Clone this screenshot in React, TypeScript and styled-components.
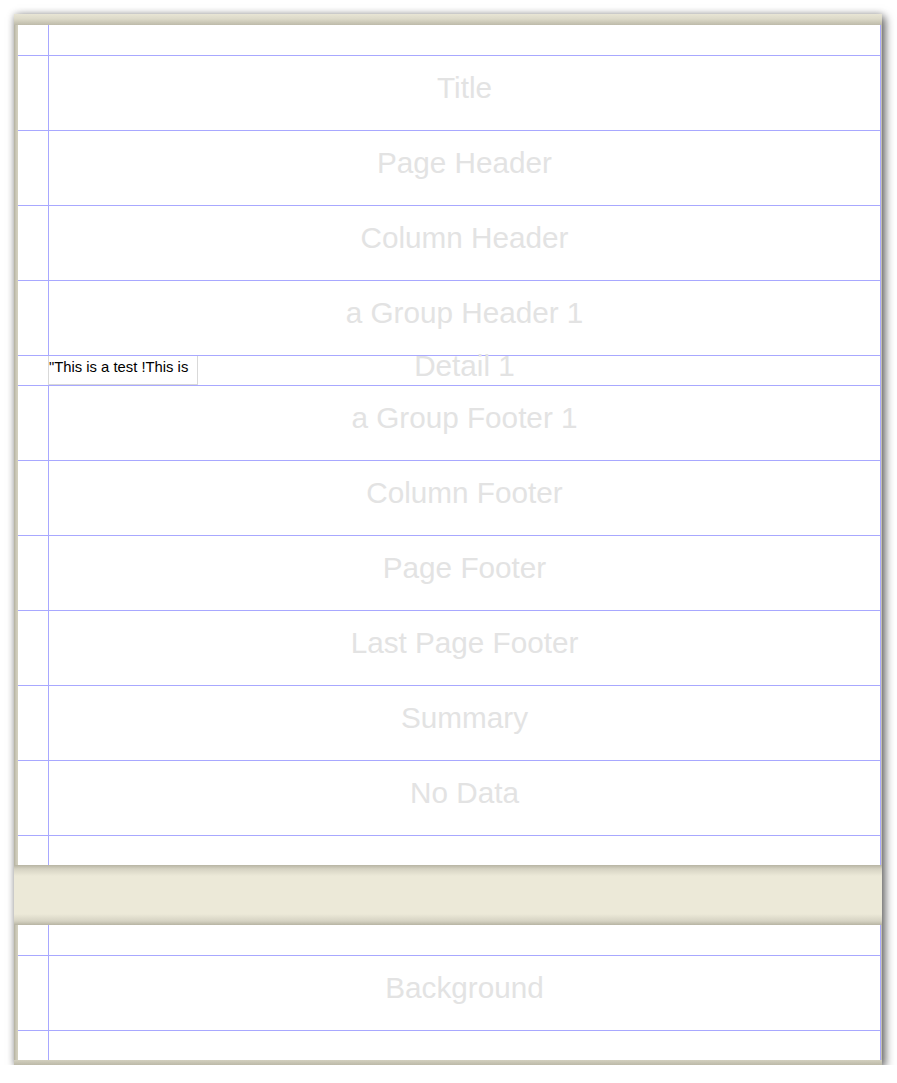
import React from "react";
import styled, { createGlobalStyle } from "styled-components";

const Global = createGlobalStyle`
  html, body {
    margin: 0;
    padding: 0;
    background: #ffffff;
  }
  body {
    font-family: "Liberation Sans", Arial, sans-serif;
  }
`;

const Canvas = styled.div`
  padding: 14px 0 0 14px;
`;

const Sheet = styled.div`
  width: 868px;
  display: flex;
  flex-direction: column;
  box-shadow: 3px 3px 9px rgba(0, 0, 0, 0.6), 0 0 7px rgba(0, 0, 0, 0.18);
  background: #ece9d8;
`;

const TopBar = styled.div`
  height: 11px;
  background: linear-gradient(to bottom, #e8e5d5 0%, #dcd9c8 45%, #bdbaa9 100%);
`;

const BottomBar = styled.div`
  height: 5px;
  background: linear-gradient(to bottom, #d3d0bf 0%, #bcb9a8 100%);
`;

const Separator = styled.div`
  height: 60px;
  background: linear-gradient(
    to bottom,
    #b7b4a3 0px,
    #d6d3c3 4px,
    #ece9d8 11px,
    #ece9d8 49px,
    #d6d3c3 56px,
    #b7b4a3 60px
  );
`;

const Page = styled.div`
  display: flex;
  flex-direction: column;
  padding: 0 1px 0 4px;
  background: linear-gradient(to right, #b3b09f 0px, #cbc8b7 2px, #d4d1c0 4px, #d4d1c0 calc(100% - 1px), #c4c1b0 calc(100% - 1px));
`;

const Row = styled.div<{ $h: number; $last?: boolean }>`
  box-sizing: border-box;
  height: ${(p) => p.$h}px;
  display: grid;
  grid-template-columns: 31px 1fr;
  grid-template-rows: minmax(0, 1fr);
  background: #ffffff;
  border-bottom: ${(p) => (p.$last ? "none" : "1px solid #a8a8ff")};
`;

const Gutter = styled.div`
  border-right: 1px solid #a8a8ff;
`;

const BandArea = styled.div`
  position: relative;
  min-height: 0;
  border-right: 1px solid #a8a8ff;
  display: flex;
  align-items: center;
  justify-content: center;
  padding-bottom: 10px;
  box-sizing: border-box;
`;

const BandLabel = styled.span`
  font-family: "Liberation Sans", Arial, sans-serif;
  font-size: 29.7px;
  color: #e3e3e3;
  white-space: nowrap;
  line-height: normal;
`;

const TextField = styled.div`
  position: absolute;
  left: -1px;
  top: 0;
  width: 150px;
  height: 29px;
  box-sizing: border-box;
  border: 1px solid #d9d9d9;
  border-top: none;
  white-space: nowrap;
  font-family: "Liberation Sans", Arial, sans-serif;
  font-size: 14.8px;
  color: #000000;
  line-height: 22px;
`;

type Band = { label?: string; h: number; last?: boolean; field?: string };

const pageOne: Band[] = [
  { h: 31 },
  { label: "Title", h: 75 },
  { label: "Page Header", h: 75 },
  { label: "Column Header", h: 75 },
  { label: "a Group Header 1", h: 75 },
  { label: "Detail 1", h: 30, field: "\"This is a test !This is" },
  { label: "a Group Footer 1", h: 75 },
  { label: "Column Footer", h: 75 },
  { label: "Page Footer", h: 75 },
  { label: "Last Page Footer", h: 75 },
  { label: "Summary", h: 75 },
  { label: "No Data", h: 75 },
  { h: 29, last: true },
];

const pageTwo: Band[] = [
  { h: 31 },
  { label: "Background", h: 75 },
  { h: 29, last: true },
];

const Bands = ({ bands }: { bands: Band[] }) => (
  <Page>
    {bands.map((b, i) => (
      <Row key={i} $h={b.h} $last={b.last}>
        <Gutter />
        <BandArea>
          {b.label && <BandLabel>{b.label}</BandLabel>}
          {b.field && <TextField>{b.field}</TextField>}
        </BandArea>
      </Row>
    ))}
  </Page>
);

export default function App() {
  return (
    <>
      <Global />
      <Canvas>
        <Sheet>
          <TopBar />
          <Bands bands={pageOne} />
          <Separator />
          <Bands bands={pageTwo} />
          <BottomBar />
        </Sheet>
      </Canvas>
    </>
  );
}
